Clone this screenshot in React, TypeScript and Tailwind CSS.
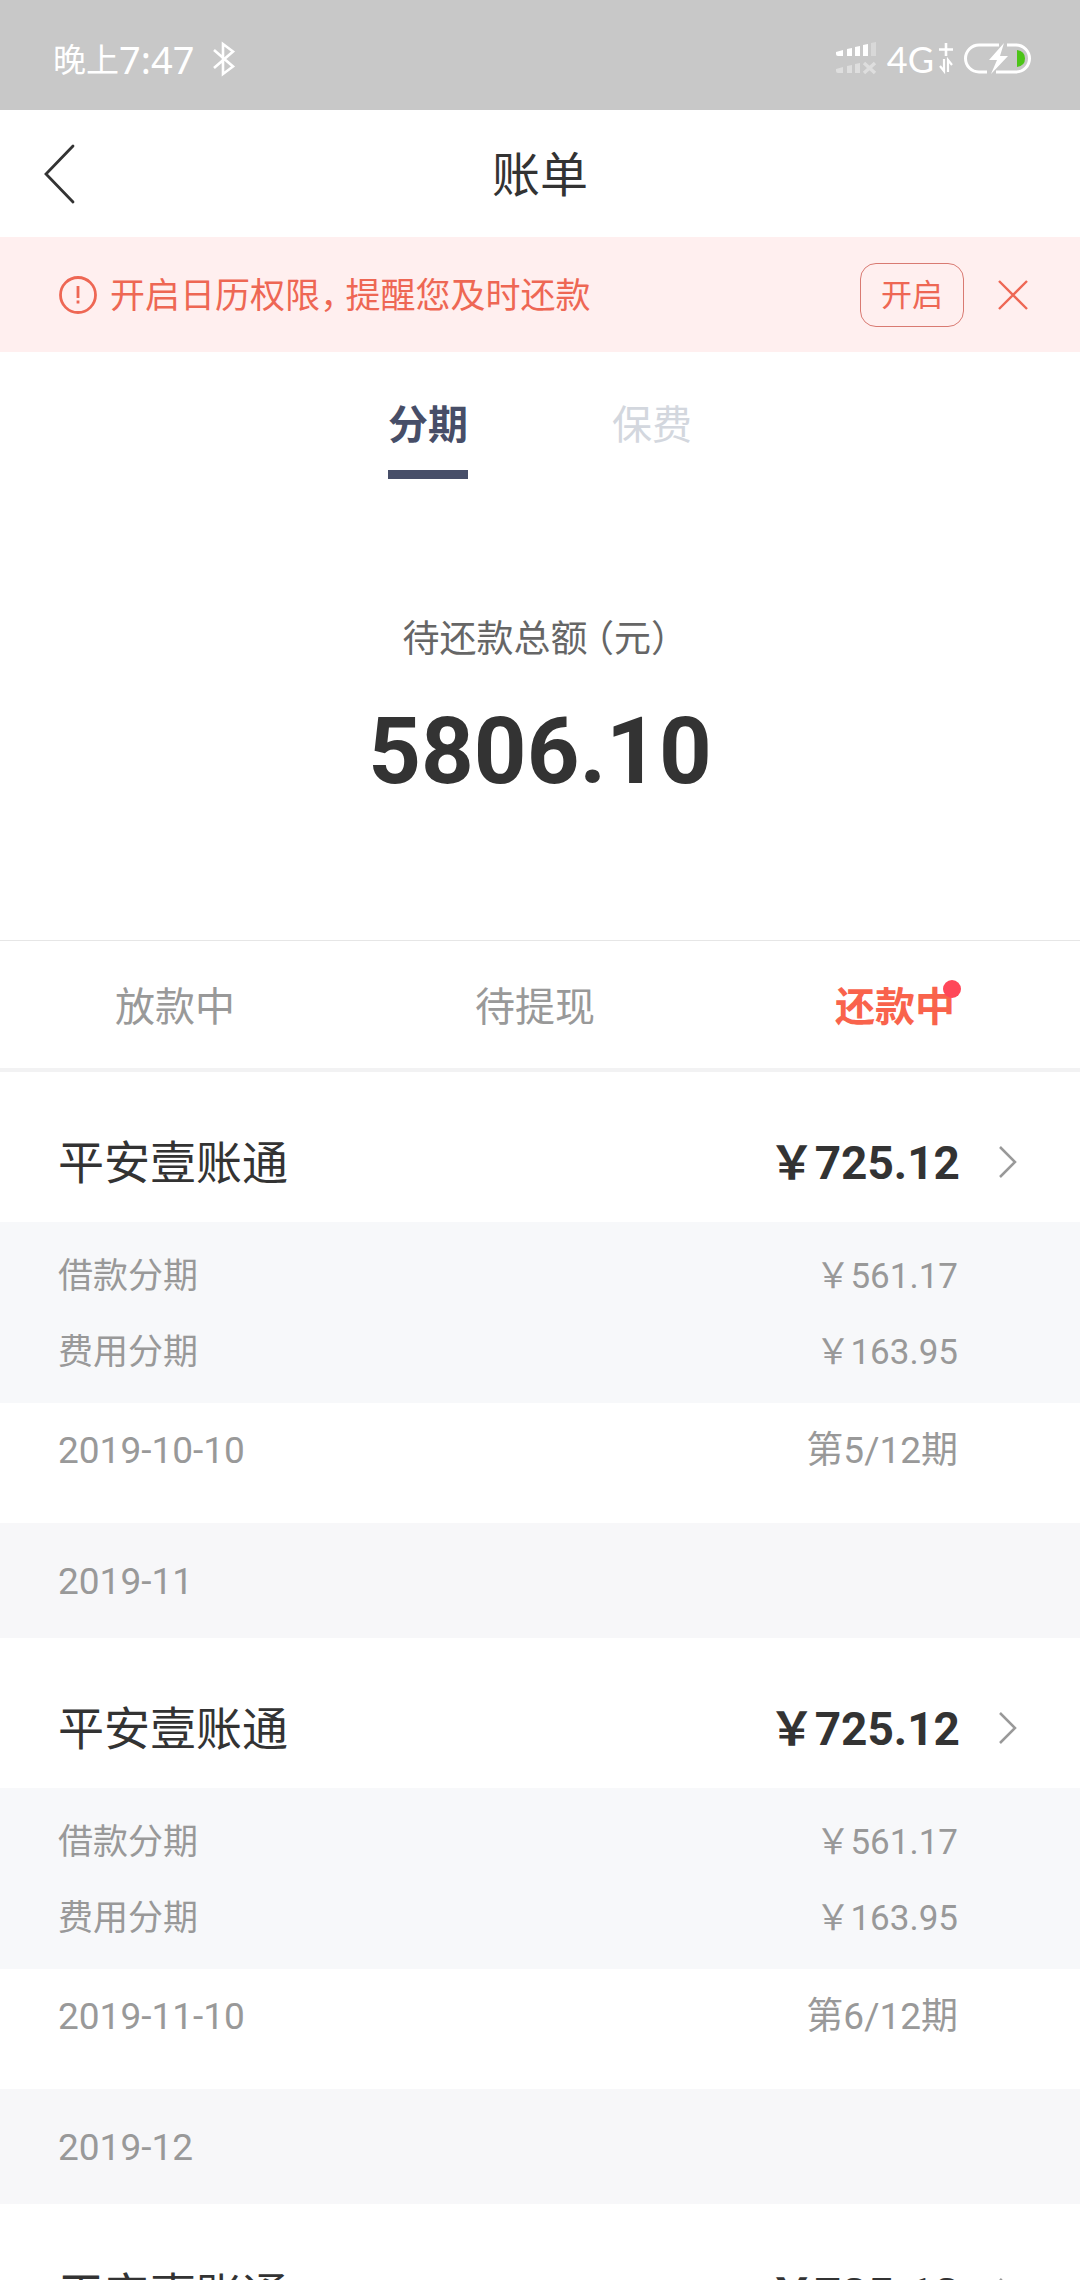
import React, { useState } from "react";

interface Bill {
  id: number;
  month?: string;
  lender: string;
  total: string;
  principal: string;
  fee: string;
  dueDate: string;
  period: string;
}

const bills: Bill[] = [
  {
    id: 1,
    lender: "平安壹账通",
    total: "725.12",
    principal: "561.17",
    fee: "163.95",
    dueDate: "2019-10-10",
    period: "第5/12期",
  },
  {
    id: 2,
    month: "2019-11",
    lender: "平安壹账通",
    total: "725.12",
    principal: "561.17",
    fee: "163.95",
    dueDate: "2019-11-10",
    period: "第6/12期",
  },
  {
    id: 3,
    month: "2019-12",
    lender: "平安壹账通",
    total: "725.12",
    principal: "561.17",
    fee: "163.95",
    dueDate: "2019-12-10",
    period: "第7/12期",
  },
];

const StatusBar: React.FC = () => (
  <div className="h-[110px] shrink-0 bg-[#c8c8c8] text-white flex items-center justify-between pl-[53px] pr-12 pt-2">
    <div className="flex items-center gap-[18px]">
      <div className="flex items-center">
        <span className="pt-1 text-[33px] leading-10">晚上</span>
        <span className="text-[38px] leading-10 font-['Noto_Sans']">7:47</span>
      </div>
      <svg width="24" height="36" viewBox="0 0 24 36" fill="none" stroke="currentColor" strokeWidth="2.6">
        <path d="M2 9 L21 25.5 L11 33 V3 L21 10.5 L2 27" />
      </svg>
    </div>

    <div className="flex items-center">
      {/* Dual SIM signal, second card has no service */}
      <svg width="44" height="36" viewBox="0 0 44 36" fill="currentColor">
        <path d="M1 11 L8 9 V15 H3 Q1 15 1 13Z" />
        <path d="M12 8 L17 7 V15 H12Z" />
        <path d="M20 6 L25 5 V15 H20Z" />
        <path d="M28 4 L33 3 V15 H28Z" />
        <path d="M36 2 L41 1 V15 H36Z" opacity="0.3" />
        <g opacity="0.4">
          <path d="M1 28 L8 26 V32 H3 Q1 32 1 30Z" />
          <path d="M12 25 L17 24 V32 H12Z" />
          <path d="M20 23 L25 22 V32 H20Z" />
          <path d="M29 22 L40 32 M40 22 L29 32" stroke="currentColor" strokeWidth="3.5" />
        </g>
      </svg>
      <span className="ml-2 text-[36px] leading-10 font-[Lato]">4G</span>
      <svg className="ml-1" width="16" height="36" viewBox="0 0 16 36" fill="none" stroke="currentColor" strokeWidth="2.6">
        <path d="M8 2 V15 M1 8.5 H15" />
        <path d="M6 18 V30 L2 25" strokeWidth="2.2" />
        <path d="M10 31 V19 L14 24" strokeWidth="2.2" />
      </svg>
      <svg className="ml-2" width="70" height="34" viewBox="0 0 70 34" fill="none">
        <path d="M37 3 H17 A13.5 13.5 0 0 0 17 30 H25" stroke="white" strokeWidth="3" />
        <path d="M45 3 H54 A13.5 13.5 0 0 1 54 30 H34" stroke="white" strokeWidth="3" />
        <path d="M42 1 L27 18 H35 L29 32 L46 14 H38 Z" fill="white" />
        <path d="M55 8 Q63 9 63 16.500 Q63 24 55 25 Z" fill="#4cc417" />
      </svg>
    </div>
  </div>
);

const BillCard: React.FC<{ bill: Bill }> = ({ bill }) => (
  <section>
    {bill.month && (
      <h2 className="h-[115px] px-[58px] pt-0.5 flex items-center bg-[#f7f7f9] text-[37px] leading-[48px] text-[#999]">
        {bill.month}
      </h2>
    )}

    <button type="button" className="w-full h-[150px] pt-8 pl-[58px] pr-[60px] flex items-center text-[46px] leading-[60px] text-[#333]">
      <span>{bill.lender}</span>
      <span className="ml-auto font-bold">￥{bill.total}</span>
      <svg className="ml-9" width="24" height="36" viewBox="0 0 24 36" fill="none" stroke="#999" strokeWidth="2.5">
        <path d="M4 2 L19 17 L4 32" />
      </svg>
    </button>

    <dl className="bg-[#f7f8fa] pt-[17px] pb-3 pl-[58px] pr-[122px] text-[35px] leading-[76px] text-[#999]">
      <div className="flex justify-between">
        <dt>借款分期</dt>
        <dd>￥{bill.principal}</dd>
      </div>
      <div className="flex justify-between">
        <dt>费用分期</dt>
        <dd>￥{bill.fee}</dd>
      </div>
    </dl>

    <div className="h-[120px] pb-6 pl-[58px] pr-[122px] flex items-center justify-between text-[37px] leading-[48px] text-[#999]">
      <span>{bill.dueDate}</span>
      <span>{bill.period}</span>
    </div>
  </section>
);

const statusTabs = ["放款中", "待提现", "还款中"];

export default function App() {
  const [showNotice, setShowNotice] = useState(true);
  const [tab, setTab] = useState("分期");
  const [status, setStatus] = useState("还款中");

  return (
    <div className="h-screen flex flex-col bg-white overflow-hidden font-[Roboto,'Noto_Sans_CJK_SC',sans-serif]">
      <StatusBar />

      <header className="h-[127px] shrink-0 grid grid-cols-[1fr_auto_1fr] items-center px-10 text-[#333]">
        <button type="button" aria-label="返回" className="justify-self-start">
          <svg width="36" height="64" viewBox="0 0 36 64" fill="none" stroke="currentColor" strokeWidth="2.8" strokeLinecap="round">
            <path d="M33 4 L6 32 L33 60" />
          </svg>
        </button>
        <h1 className="pt-1 text-[48px] leading-[64px]">账单</h1>
      </header>

      <main className="flex-1 min-h-0 overflow-y-auto [scrollbar-width:none]">
        {showNotice && (
          <div className="h-[115px] bg-[#ffefef] text-[#ee6754] flex items-center pl-[58px] pr-[50px]">
            <svg width="40" height="40" viewBox="0 0 40 40" fill="none" stroke="currentColor" strokeWidth="2.8">
              <circle cx="20" cy="20" r="17.500" />
              <path d="M20 11 V23 M20 25.500 V28.500" />
            </svg>
            <p className="ml-3 pt-1 text-[35px] leading-[48px]">
              开启日历权限<span className="mr-2 [font-feature-settings:'halt']">，</span>提醒您及时还款
            </p>
            <button
              type="button"
              className="ml-auto w-[104px] h-16 pt-0.5 rounded-2xl border border-[#d97a72] text-[31px] leading-10"
            >
              开启
            </button>
            <button type="button" aria-label="关闭" className="ml-8" onClick={() => setShowNotice(false)}>
              <svg width="34" height="34" viewBox="0 0 34 34" fill="none" stroke="currentColor" strokeWidth="2.4">
                <path d="M3 3 L31 31 M31 3 L3 31" />
              </svg>
            </button>
          </div>
        )}

        <nav className="pt-[42px] flex justify-center gap-36 text-[40px] leading-[64px]">
          {["分期", "保费"].map((name) => (
            <button
              key={name}
              type="button"
              onClick={() => setTab(name)}
              className={
                tab === name
                  ? "pb-3 border-b-9 border-[#474e68] font-bold text-[#474e68]"
                  : "pb-3 border-b-9 border-transparent text-[#d3d7de]"
              }
            >
              {name}
            </button>
          ))}
        </nav>

        <div className="pt-[135px] pb-[132px] text-center">
          <p className="text-[37px] leading-[52px] text-[#666]">
            待还款总额<span className="mx-2 [font-feature-settings:'halt']">（元）</span>
          </p>
          <p className="mt-[30px] text-[92px] leading-[112px] font-bold text-[#333]">5806.10</p>
        </div>

        {/* Status filter */}
        <nav className="h-[132px] grid grid-cols-3 border-t border-t-[#e6e6e6] border-b-4 border-b-[#f2f2f3] text-[40px] leading-[56px]">
          {statusTabs.map((name) => (
            <button
              key={name}
              type="button"
              onClick={() => setStatus(name)}
              className={
                status === name
                  ? "pt-1.5 pr-[10px] font-bold text-[#f9634c]"
                  : "pt-1.5 pr-[10px] text-[#999]"
              }
            >
              <span className="relative">
                {name}
                {name === "还款中" && (
                  <i className="absolute -right-1.5 -top-1 size-[18px] rounded-full bg-[#ff4759]" />
                )}
              </span>
            </button>
          ))}
        </nav>

        {bills.map((bill) => (
          <BillCard key={bill.id} bill={bill} />
        ))}
      </main>
    </div>
  );
}
